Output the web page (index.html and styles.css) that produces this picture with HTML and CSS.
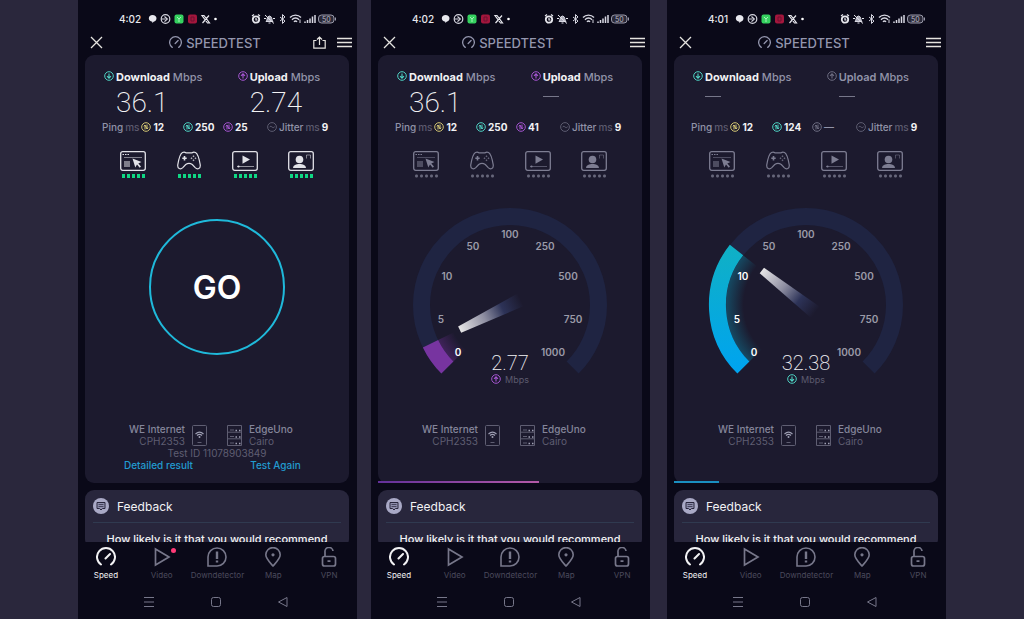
FILE: index.html
```
<!DOCTYPE html>
<html lang="en">
<head>
    <meta charset="UTF-8">
    <meta name="viewport" content="width=device-width, initial-scale=1.0">
    <title>Speedtest</title>
    <link rel="stylesheet" href="styles.css">
</head>
<body>
    <!-- Shared icons -->
    <svg class="sprite" aria-hidden="true">
        <symbol id="status-left" viewBox="0 0 74 12">
            <path fill="#e8e8ee" d="M4.500 2c2.400 0 4 1.500 4 3.300S7.300 8.500 6 8.600L4.300 10V8.700C2 8.500.8 7 .8 5.300S2.300 2 4.500 2z"/>
            <g fill="none" stroke="#d5d5df" stroke-width="1.200"><circle cx="17.500" cy="6" r="4.300"/><path d="M13.500 6h4M16.500 3.500 19.300 6l-2.800 2.600"/></g>
            <rect x="26.500" y="1.500" width="9" height="9" rx="2" fill="#35d15f"/>
            <path d="M29 4l2 2 2-2M31 6v3" stroke="#a5f0b8" fill="none"/>
            <rect x="40" y="1.500" width="9" height="9" rx="2" fill="#a3163c"/>
            <path d="M43 4h3v4h-3z" stroke="#6f1030" fill="none"/>
            <path d="M54 2.500h2l5.500 7.500h-2zM61 2.500 54.500 10" stroke="#e8e8ee" stroke-width="1.200" fill="none"/>
            <circle cx="67.500" cy="6" r="1.300" fill="#fff"/>
        </symbol>
        <symbol id="status-right" viewBox="0 0 86 12">
            <circle cx="5" cy="6.500" r="3.200" fill="none" stroke="#e8e8ee" stroke-width="1.800"/>
            <path d="M1 3l2-1.500M9 3 7 1.500M5 5v2h1.500" stroke="#e8e8ee" stroke-width="1.200" fill="none"/>
            <path d="M15 8.500c1.500-1 .8-5.500 3.500-5.500S20.500 7.500 22 8.500zM17.500 10h2" fill="#aaaab8" stroke="#d8d8e2"/>
            <path d="M14 2l9 8.500M13 5.500h2M22 5.500h2" stroke="#e8e8ee" fill="none"/>
            <path d="M29 4l5 4-2.500 2.500v-9L34 4l-5 4" stroke="#d8d8e2" fill="none"/>
            <g fill="none" stroke="#d8d8e2" stroke-width="1.400"><path d="M39 4.500c3-3.200 8-3.200 11 0M41 6.700c2-2.200 5-2.200 7 0M43 8.900c1-1.200 2-1.200 3 0"/></g>
            <path d="M49 10V6.500" stroke="#d8d8e2"/>
            <path d="M54 10V8.500M56.500 10V7M59 10V5.500M61.500 10V3.500M64 10V2" stroke="#d8d8e2" stroke-width="1.500"/>
            <rect x="67.500" y="2" width="15.500" height="8" rx="3" fill="#2a2938" stroke="#9a9aaa"/>
            <path d="M84.500 4.500v3" stroke="#9a9aaa"/>
            <text x="75.300" y="8.500" text-anchor="middle" font-size="7" fill="#b9b9c6">50</text>
        </symbol>
        <symbol id="close" viewBox="0 0 13 13"><path d="M1 1l11 11M12 1 1 12" fill="none" stroke="currentColor" stroke-width="1.300"/></symbol>
        <symbol id="share" viewBox="0 0 13 13"><path d="M3.500 4.500H.8v7.700h11.400V4.500H9.500M6.500 9V1.200M4 3.500l2.500-2.500L9 3.500" fill="none" stroke="currentColor" stroke-width="1.200"/></symbol>
        <symbol id="menu" viewBox="0 0 15 11"><path d="M0 1.500h15M0 5.500h15M0 9.500h15" stroke="currentColor" stroke-width="1.700"/></symbol>
        <symbol id="meter" viewBox="0 0 20 20"><path d="M5 17.500a9 9 0 1 1 10 0M9.500 11.500l4.500-4.500" fill="none" stroke="currentColor" stroke-width="2" stroke-linecap="round"/></symbol>
        <symbol id="down" viewBox="0 0 10 10"><circle cx="5" cy="5" r="4.300" fill="none" stroke="currentColor"/><path d="M5 2.500v4.500M3 5.200l2 2 2-2" fill="none" stroke="currentColor" stroke-width="1.100"/></symbol>
        <symbol id="up" viewBox="0 0 10 10"><circle cx="5" cy="5" r="4.300" fill="none" stroke="currentColor"/><path d="M5 7.500V3M3 4.800l2-2 2 2" fill="none" stroke="currentColor" stroke-width="1.100"/></symbol>
        <symbol id="swap" viewBox="0 0 10 10"><circle cx="5" cy="5" r="4.300" fill="none" stroke="currentColor"/><path d="M4 7.500V3L2.800 4.300M6 2.500V7l1.200-1.300M4 3l2 4" fill="none" stroke="currentColor"/></symbol>
        <symbol id="jitter" viewBox="0 0 10 10"><circle cx="5" cy="5" r="4.400" fill="none" stroke="currentColor" stroke-width=".8"/><path d="M2.300 5.300c1-1.400 1.800-1 2.700-.3s1.700 1 2.700-.3" fill="none" stroke="currentColor" stroke-width=".8"/></symbol>
        <symbol id="web" viewBox="0 0 26 20">
            <rect x=".7" y=".7" width="24.600" height="18.600" rx="2" fill="none" stroke="currentColor" stroke-width="1.300"/>
            <path d="M2.500 3.500h1.500M5 3.500h1.500M7.500 3.500H9" stroke="currentColor"/>
            <path d="M4 6.500h18" stroke="currentColor" opacity=".5"/>
            <path d="M4 10h6v6H4z" fill="currentColor" opacity=".5"/>
            <path d="M12.500 7.500l9 3.500-3.200 1.400 2.700 3.200-1.300 1.100-2.700-3.200-1.700 3z" fill="currentColor"/>
        </symbol>
        <symbol id="game" viewBox="0 0 26 20">
            <path d="M6.500 1.500c1.200-.6 2.300-.6 3.400.3h6.200c1.100-.9 2.200-.9 3.400-.3 2.500 1.200 3.900 7.500 4.700 12.200.6 4-2.700 5.300-5 3l-2.900-3.200c-2-1.300-4.600-1.300-6.600 0l-2.900 3.200c-2.300 2.300-5.600 1-5-3C2.600 9 4 2.700 6.500 1.500z" fill="none" stroke="currentColor" stroke-width="1.200"/>
            <path d="M8.500 5v4.400M6.300 7.200h4.400" stroke="currentColor" stroke-width="1.600"/>
            <path d="M17.500 4.200l1 1-1 1-1-1zM17.500 8.200l1 1-1 1-1-1zM15.500 6.200l1 1-1 1-1-1zM19.500 6.200l1 1-1 1-1-1z" fill="currentColor" opacity=".8"/>
        </symbol>
        <symbol id="video" viewBox="0 0 26 20">
            <rect x=".7" y=".7" width="24.600" height="18.600" rx="2" fill="none" stroke="currentColor" stroke-width="1.300"/>
            <path d="M10.500 4.500l7.500 4-7.500 4.300z" fill="currentColor"/>
            <path d="M5 15.500h17" stroke="currentColor" opacity=".6"/><circle cx="6.500" cy="15.500" r="1.100" fill="currentColor"/>
        </symbol>
        <symbol id="person" viewBox="0 0 26 20">
            <rect x=".7" y=".7" width="24.600" height="18.600" rx="2" fill="none" stroke="currentColor" stroke-width="1.300"/>
            <circle cx="11.500" cy="8.500" r="3.800" fill="currentColor"/>
            <path d="M5 17c.3-3 3-4 6.500-4s6.200 1 6.500 4z" fill="currentColor"/>
            <path d="M18.500 7.500V4h4v3.500" fill="none" stroke="currentColor" opacity=".5"/>
        </symbol>
        <symbol id="phone" viewBox="0 0 15 21">
            <rect x=".5" y=".5" width="14" height="20" rx="1" fill="none" stroke="currentColor"/>
            <path d="M3.500 9c2.500-2.300 5.500-2.300 8 0M5 10.500c1.500-1.400 3.500-1.400 5 0" fill="none" stroke="#9fa0b4" stroke-width="1.100"/><circle cx="7.500" cy="12" r="1" fill="#9fa0b4"/>
            <path d="M5.500 17.500h4" stroke="currentColor"/>
        </symbol>
        <symbol id="server" viewBox="0 0 15 21">
            <path d="M.5.500h14v20H.5zM.5 7.200h14M.5 13.800h14M3 5h4M3 11.500h4M3 18h4" fill="none" stroke="currentColor"/>
            <path d="M8.500 5.500H10M12 5.500h1.500M8.500 12H10M12 12h1.500M8.500 18.500H10M12 18.500h1.500" stroke="#9fa0b4" stroke-width="1.500"/>
        </symbol>
        <symbol id="feedback" viewBox="0 0 16 16">
            <circle cx="8" cy="8" r="8" fill="#a9a9c6"/>
            <path d="M4 4.500h8v6H9.500L8 12l-1.500-1.500H4z" fill="#8f8fae" stroke="#28263c"/>
            <path d="M5.500 6.500h5M5.500 8.500h5" stroke="#28263c" stroke-width=".7"/>
        </symbol>
        <symbol id="play" viewBox="0 0 20 20"><path d="M3.500 2v16L17 10z" fill="none" stroke="currentColor" stroke-width="1.700"/></symbol>
        <symbol id="alert" viewBox="0 0 20 20"><path d="M1 19v-9a9 9 0 1 1 9 9z" fill="none" stroke="currentColor" stroke-width="1.600"/><path d="M10 4.500v7.500M10 13.500v2" stroke="currentColor" stroke-width="2.400"/></symbol>
        <symbol id="pin" viewBox="0 0 20 20"><path d="M10 19C6 14.500 2.800 11.500 2.800 7.800a7.200 7.200 0 0 1 14.400 0C17.200 11.500 14 14.500 10 19z" fill="none" stroke="currentColor" stroke-width="1.600"/><circle cx="10" cy="7.800" r="1.600" fill="currentColor"/></symbol>
        <symbol id="lock" viewBox="0 0 20 20"><rect x="3.500" y="9.500" width="13" height="9.500" rx="2" fill="none" stroke="currentColor" stroke-width="1.700"/><path d="M6 9.500V5a4 4 0 0 1 8-1M8.500 14.200h3" fill="none" stroke="currentColor" stroke-width="1.700"/></symbol>
        <symbol id="sys-menu" viewBox="0 0 12 12"><path d="M1 1.500h10M1 6h10M1 10.500h10" stroke="currentColor"/></symbol>
        <symbol id="sys-home" viewBox="0 0 12 12"><rect x="1.500" y="1.500" width="9" height="9" rx="2" fill="none" stroke="currentColor"/></symbol>
        <symbol id="sys-back" viewBox="0 0 12 12"><path d="M10 1.500v9L1.500 6z" fill="none" stroke="currentColor"/></symbol>

        <symbol id="dial" viewBox="-100 -98 200 180" overflow="visible">
            <path d="M-62.600 62.600A88.500 88.500 0 1 1 62.600 62.600" fill="none" stroke="#1f2442" stroke-width="17"/>
        </symbol>
        <defs>
            <linearGradient id="needle" gradientUnits="userSpaceOnUse" x1="-56" y1="0" x2="12" y2="0">
                <stop offset="0" stop-color="#e6e5e6"/>
                <stop offset=".4" stop-color="#8f8fa2"/>
                <stop offset=".7" stop-color="#2d3358"/>
                <stop offset="1" stop-color="#1c1a2e"/>
            </linearGradient>
            <linearGradient id="blue" x1="0" y1="0" x2="0" y2="1">
                <stop offset="0" stop-color="#0fb0c6"/>
                <stop offset="1" stop-color="#00a4ee"/>
            </linearGradient>
            <radialGradient id="blue-glow" gradientUnits="userSpaceOnUse" cx="0" cy="0" r="80">
                <stop offset=".78" stop-color="#0c8fb0" stop-opacity="0"/>
                <stop offset="1" stop-color="#0c8fb0" stop-opacity=".4"/>
            </radialGradient>
            <radialGradient id="purple-glow" gradientUnits="userSpaceOnUse" cx="0" cy="0" r="80">
                <stop offset=".78" stop-color="#75309c" stop-opacity="0"/>
                <stop offset="1" stop-color="#75309c" stop-opacity=".4"/>
            </radialGradient>
        </defs>
    </svg>

    <main class="screens">
        <!-- Finished test -->
        <section class="screen done">
            <div class="status">
                <span class="time">4:02</span>
                <svg class="status-left"><use href="#status-left"/></svg>
                <svg class="status-right"><use href="#status-right"/></svg>
            </div>
            <header class="header">
                <button class="icon-button" aria-label="Close"><svg class="i13"><use href="#close"/></svg></button>
                <h1 class="brand"><svg class="i13"><use href="#meter"/></svg>SPEEDTEST</h1>
                <div class="actions">
                    <button class="icon-button" aria-label="Share"><svg class="i13"><use href="#share"/></svg></button>
                    <button class="icon-button" aria-label="Menu"><svg class="menu"><use href="#menu"/></svg></button>
                </div>
            </header>
            <div class="content">
                <div class="card">
                    <div class="results">
                        <div class="result"><svg class="i10 teal"><use href="#down"/></svg><span class="label"><b>Download</b> Mbps</span><span class="value">36.1</span></div>
                        <div class="result"><svg class="i10 purple"><use href="#up"/></svg><span class="label"><b>Upload</b> Mbps</span><span class="value">2.74</span></div>
                    </div>
                    <div class="latency">
                        <span class="stat">Ping <small>ms</small> <svg class="i10 yellow"><use href="#swap"/></svg><b>12</b></span>
                        <span class="stat"><svg class="i10 teal"><use href="#swap"/></svg><b>250</b></span>
                        <span class="stat"><svg class="i10 purple"><use href="#swap"/></svg><b>25</b></span>
                        <span class="stat"><svg class="i10 grey"><use href="#jitter"/></svg>Jitter <small>ms</small> <b>9</b></span>
                    </div>
                    <div class="quality">
                        <span class="kind"><svg><use href="#web"/></svg><i class="dots"></i></span>
                        <span class="kind"><svg><use href="#game"/></svg><i class="dots"></i></span>
                        <span class="kind"><svg><use href="#video"/></svg><i class="dots"></i></span>
                        <span class="kind"><svg><use href="#person"/></svg><i class="dots"></i></span>
                    </div>
                    <div class="stage"><button class="go">GO</button></div>
                    <div class="route">
                        <p class="client"><strong>WE Internet</strong>CPH2353</p>
                        <svg><use href="#phone"/></svg>
                        <svg><use href="#server"/></svg>
                        <p><strong>EdgeUno</strong>Cairo</p>
                    </div>
                    <p class="test-id">Test ID 11078903849</p>
                    <div class="links"><a href="#">Detailed result</a><a href="#">Test Again</a></div>
                </div>
                <div class="feedback">
                    <h2><svg class="i16"><use href="#feedback"/></svg>Feedback</h2>
                    <p>How likely is it that you would recommend</p>
                </div>
            </div>
            <nav class="tabs">
                <a href="#" class="active"><svg class="i20"><use href="#meter"/></svg>Speed</a>
                <a href="#" class="new"><svg class="i20"><use href="#play"/></svg>Video</a>
                <a href="#"><svg class="i20"><use href="#alert"/></svg>Downdetector</a>
                <a href="#"><svg class="i20"><use href="#pin"/></svg>Map</a>
                <a href="#"><svg class="i20"><use href="#lock"/></svg>VPN</a>
            </nav>
            <div class="system">
                <button aria-label="Recent apps"><svg class="i12"><use href="#sys-menu"/></svg></button>
                <button aria-label="Home"><svg class="i12"><use href="#sys-home"/></svg></button>
                <button aria-label="Back"><svg class="i12"><use href="#sys-back"/></svg></button>
            </div>
        </section>

        <!-- Upload running -->
        <section class="screen">
            <div class="status">
                <span class="time">4:02</span>
                <svg class="status-left"><use href="#status-left"/></svg>
                <svg class="status-right"><use href="#status-right"/></svg>
            </div>
            <header class="header">
                <button class="icon-button" aria-label="Close"><svg class="i13"><use href="#close"/></svg></button>
                <h1 class="brand"><svg class="i13"><use href="#meter"/></svg>SPEEDTEST</h1>
                <div class="actions">
                    <button class="icon-button" aria-label="Menu"><svg class="menu"><use href="#menu"/></svg></button>
                </div>
            </header>
            <div class="content">
                <div class="card">
                    <div class="results">
                        <div class="result"><svg class="i10 teal"><use href="#down"/></svg><span class="label"><b>Download</b> Mbps</span><span class="value">36.1</span></div>
                        <div class="result"><svg class="i10 purple"><use href="#up"/></svg><span class="label"><b>Upload</b> Mbps</span><span class="value empty"></span></div>
                    </div>
                    <div class="latency">
                        <span class="stat">Ping <small>ms</small> <svg class="i10 yellow"><use href="#swap"/></svg><b>12</b></span>
                        <span class="stat"><svg class="i10 teal"><use href="#swap"/></svg><b>250</b></span>
                        <span class="stat"><svg class="i10 purple"><use href="#swap"/></svg><b>41</b></span>
                        <span class="stat"><svg class="i10 grey"><use href="#jitter"/></svg>Jitter <small>ms</small> <b>9</b></span>
                    </div>
                    <div class="quality">
                        <span class="kind"><svg><use href="#web"/></svg><i class="dots"></i></span>
                        <span class="kind"><svg><use href="#game"/></svg><i class="dots"></i></span>
                        <span class="kind"><svg><use href="#video"/></svg><i class="dots"></i></span>
                        <span class="kind"><svg><use href="#person"/></svg><i class="dots"></i></span>
                    </div>
                    <div class="stage">
                        <svg class="gauge" viewBox="-100 -98 200 180">
                            <use href="#dial" x="-100" y="-98" width="200" height="180"/>
                            <path d="M-49.500 49.500A70 70 0 0 1-62.900 30.700" fill="none" stroke="url(#purple-glow)" stroke-width="20"/>
                            <path d="M-62.600 62.600A88.500 88.500 0 0 1-79.500 38.800" fill="none" stroke="#7734a0" stroke-width="17"/>
                            <path d="M-56-3.500 12-7V7L-56 3.500z" fill="url(#needle)" transform="rotate(-26)"/>
                            <g class="ticks">
                                <text class="lit" x="-52" y="51">0</text>
                                <text x="-69" y="18">5</text>
                                <text x="-63" y="-25">10</text>
                                <text x="-37" y="-55">50</text>
                                <text x="0" y="-67">100</text>
                                <text x="35" y="-55">250</text>
                                <text x="58" y="-25">500</text>
                                <text x="63" y="18">750</text>
                                <text x="43" y="51">1000</text>
                            </g>
                            <text class="speed" x="0" y="65">2.77</text>
                            <use class="purple" href="#up" x="-19" y="69" width="10" height="10"/>
                            <text class="unit" x="7" y="78">Mbps</text>
                        </svg>
                    </div>
                    <div class="route">
                        <p class="client"><strong>WE Internet</strong>CPH2353</p>
                        <svg><use href="#phone"/></svg>
                        <svg><use href="#server"/></svg>
                        <p><strong>EdgeUno</strong>Cairo</p>
                    </div>
                    <div class="progress upload" style="width: 61%"></div>
                </div>
                <div class="feedback">
                    <h2><svg class="i16"><use href="#feedback"/></svg>Feedback</h2>
                    <p>How likely is it that you would recommend</p>
                </div>
            </div>
            <nav class="tabs">
                <a href="#" class="active"><svg class="i20"><use href="#meter"/></svg>Speed</a>
                <a href="#"><svg class="i20"><use href="#play"/></svg>Video</a>
                <a href="#"><svg class="i20"><use href="#alert"/></svg>Downdetector</a>
                <a href="#"><svg class="i20"><use href="#pin"/></svg>Map</a>
                <a href="#"><svg class="i20"><use href="#lock"/></svg>VPN</a>
            </nav>
            <div class="system">
                <button aria-label="Recent apps"><svg class="i12"><use href="#sys-menu"/></svg></button>
                <button aria-label="Home"><svg class="i12"><use href="#sys-home"/></svg></button>
                <button aria-label="Back"><svg class="i12"><use href="#sys-back"/></svg></button>
            </div>
        </section>

        <!-- Download running -->
        <section class="screen">
            <div class="status">
                <span class="time">4:01</span>
                <svg class="status-left"><use href="#status-left"/></svg>
                <svg class="status-right"><use href="#status-right"/></svg>
            </div>
            <header class="header">
                <button class="icon-button" aria-label="Close"><svg class="i13"><use href="#close"/></svg></button>
                <h1 class="brand"><svg class="i13"><use href="#meter"/></svg>SPEEDTEST</h1>
                <div class="actions">
                    <button class="icon-button" aria-label="Menu"><svg class="menu"><use href="#menu"/></svg></button>
                </div>
            </header>
            <div class="content">
                <div class="card">
                    <div class="results">
                        <div class="result"><svg class="i10 teal"><use href="#down"/></svg><span class="label"><b>Download</b> Mbps</span><span class="value empty"></span></div>
                        <div class="result waiting"><svg class="i10 grey"><use href="#up"/></svg><span class="label"><b>Upload</b> Mbps</span><span class="value empty"></span></div>
                    </div>
                    <div class="latency">
                        <span class="stat">Ping <small>ms</small> <svg class="i10 yellow"><use href="#swap"/></svg><b>12</b></span>
                        <span class="stat"><svg class="i10 teal"><use href="#swap"/></svg><b>124</b></span>
                        <span class="stat"><svg class="i10 grey"><use href="#swap"/></svg>—</span>
                        <span class="stat"><svg class="i10 grey"><use href="#jitter"/></svg>Jitter <small>ms</small> <b>9</b></span>
                    </div>
                    <div class="quality">
                        <span class="kind"><svg><use href="#web"/></svg><i class="dots"></i></span>
                        <span class="kind"><svg><use href="#game"/></svg><i class="dots"></i></span>
                        <span class="kind"><svg><use href="#video"/></svg><i class="dots"></i></span>
                        <span class="kind"><svg><use href="#person"/></svg><i class="dots"></i></span>
                    </div>
                    <div class="stage">
                        <svg class="gauge" viewBox="-100 -98 200 180">
                            <use href="#dial" x="-100" y="-98" width="200" height="180"/>
                            <path d="M-49.500 49.500A70 70 0 0 1-54.900-43.400" fill="none" stroke="url(#blue-glow)" stroke-width="20"/>
                            <path d="M-62.600 62.600A88.500 88.500 0 0 1-69.500-54.900" fill="none" stroke="url(#blue)" stroke-width="17"/>
                            <path d="M-56-3.500 12-7V7L-56 3.500z" fill="url(#needle)" transform="rotate(38)"/>
                            <g class="ticks">
                                <text class="lit" x="-52" y="51">0</text>
                                <text class="lit" x="-69" y="18">5</text>
                                <text class="lit" x="-63" y="-25">10</text>
                                <text x="-37" y="-55">50</text>
                                <text x="0" y="-67">100</text>
                                <text x="35" y="-55">250</text>
                                <text x="58" y="-25">500</text>
                                <text x="63" y="18">750</text>
                                <text x="43" y="51">1000</text>
                            </g>
                            <text class="speed" x="0" y="65">32.38</text>
                            <use class="teal" href="#down" x="-19" y="69" width="10" height="10"/>
                            <text class="unit" x="7" y="78">Mbps</text>
                        </svg>
                    </div>
                    <div class="route">
                        <p class="client"><strong>WE Internet</strong>CPH2353</p>
                        <svg><use href="#phone"/></svg>
                        <svg><use href="#server"/></svg>
                        <p><strong>EdgeUno</strong>Cairo</p>
                    </div>
                    <div class="progress download" style="width: 17%"></div>
                </div>
                <div class="feedback">
                    <h2><svg class="i16"><use href="#feedback"/></svg>Feedback</h2>
                    <p>How likely is it that you would recommend</p>
                </div>
            </div>
            <nav class="tabs">
                <a href="#" class="active"><svg class="i20"><use href="#meter"/></svg>Speed</a>
                <a href="#"><svg class="i20"><use href="#play"/></svg>Video</a>
                <a href="#"><svg class="i20"><use href="#alert"/></svg>Downdetector</a>
                <a href="#"><svg class="i20"><use href="#pin"/></svg>Map</a>
                <a href="#"><svg class="i20"><use href="#lock"/></svg>VPN</a>
            </nav>
            <div class="system">
                <button aria-label="Recent apps"><svg class="i12"><use href="#sys-menu"/></svg></button>
                <button aria-label="Home"><svg class="i12"><use href="#sys-home"/></svg></button>
                <button aria-label="Back"><svg class="i12"><use href="#sys-back"/></svg></button>
            </div>
        </section>
    </main>
</body>
</html>
```
FILE: styles.css
```
* {
    box-sizing: border-box;
}

body {
    margin: 0;
    font-family: Inter, "Liberation Sans", sans-serif;
    font-size: 11px;
    color: #9193a8;
    background-color: #2a273c;
}

h1, h2, p {
    margin: 0;
    font-weight: 400;
}

button {
    padding: 0;
    border: none;
    background: none;
    color: inherit;
    font-family: inherit;
    cursor: pointer;
}

a {
    color: inherit;
    text-decoration: none;
}

svg {
    display: block;
    flex: none;
}

.sprite {
    position: absolute;
    width: 0;
    height: 0;
}

.i10 { width: 10px; height: 10px; }
.i12 { width: 12px; height: 12px; }
.i13 { width: 13px; height: 13px; }
.i16 { width: 16px; height: 16px; }
.i20 { width: 20px; height: 20px; }

.teal { color: #4fd3c4; }
.purple { color: #a455d0; }
.yellow { color: #d3c673; }
.grey { color: #6c6c80; }

.screens {
    display: grid;
    grid-template-columns: 279fr 279fr 282fr;
    gap: 14px;
    padding: 0 78px;
}

.screen {
    display: flex;
    flex-direction: column;
    height: 100vh;
    min-width: 0;
    background-color: #0a0918;
}

.screen:last-child {
    margin-left: 3px;
}

/* Status bar */
.status {
    display: flex;
    align-items: center;
    gap: 7px;
    padding: 12px 20px 0 41px;
}

.time {
    font-size: 10px;
    line-height: 14px;
    font-weight: 500;
    color: #e8e8ee;
}

.status-left {
    width: 74px;
    height: 12px;
}

.status-right {
    width: 86px;
    height: 12px;
    margin-left: auto;
}

/* App header */
.header {
    display: grid;
    grid-template-columns: 1fr auto 1fr;
    align-items: center;
    height: 29px;
    padding: 4px 5px 0 6px;
}

.icon-button {
    justify-self: start;
    padding: 0 6px;
    color: #e6e4e0;
}

.brand {
    display: flex;
    align-items: center;
    gap: 4px;
    margin-right: 6px;
    font-size: 13px;
    font-weight: 500;
    color: #9496ae;
}

.actions {
    display: flex;
    justify-content: flex-end;
    align-items: center;
    gap: 5px;
}

.actions .icon-button {
    padding: 0 0 0 6px;
}

.menu {
    width: 15px;
    height: 11px;
}

.content {
    flex: 1;
    min-height: 0;
    overflow: hidden;
    padding: 0 8px 0 7px;
}

.card {
    position: relative;
    min-height: 428px;
    padding-top: 13px;
    border-radius: 9px;
    background-color: #1c1a2e;
}

/* Results */
.results {
    display: grid;
    grid-template-columns: 6fr 5fr;
    padding-left: 19px;
}

.result {
    display: grid;
    grid-template-columns: 10px 1fr;
    column-gap: 2px;
    padding-top: 1px;
}

.result .i10 {
    margin-top: 2px;
}

.label {
    line-height: 17px;
    font-weight: 500;
    white-space: nowrap;
}

.label b {
    font-weight: 700;
    color: #f2f2f4;
}

.waiting .label b {
    font-weight: 600;
    color: inherit;
}

.value {
    grid-column: 2;
    height: 32px;
    font-family: Roboto, sans-serif;
    font-size: 28px;
    line-height: 34px;
    font-weight: 200;
    color: #f2f2f4;
}

.value.empty::before {
    content: "";
    display: block;
    width: 16px;
    height: 1px;
    margin-top: 10px;
    background-color: #77778a;
}

.latency {
    display: grid;
    grid-template-columns: 81fr 40fr 44fr 64fr;
    padding: 1px 18px 0 17px;
    font-size: 10px;
    line-height: 16px;
    font-weight: 500;
}

.stat {
    display: flex;
    align-items: center;
    gap: 2px;
    white-space: nowrap;
}

.stat small {
    font-size: 10px;
    color: #5c5b6e;
}

.stat b {
    font-weight: 700;
    color: #f2f2f4;
}

.quality {
    display: flex;
    justify-content: center;
    gap: 30px;
    padding-top: 16px;
    color: #7d7d92;
}

.kind svg {
    width: 26px;
    height: 20px;
}

.dots {
    display: block;
    width: 25px;
    height: 4px;
    margin: 3px auto 0;
    background-image: radial-gradient(circle, #66667a 1px, transparent 2px);
    background-size: 5px 4px;
}

.done .quality {
    color: #e2e2e8;
}

.done .dots {
    background-image: radial-gradient(circle, #0fd884 2px, transparent 2px);
}

/* Go button and gauge */
.stage {
    display: flex;
    justify-content: center;
    height: 245px;
}

.go {
    width: 136px;
    height: 136px;
    margin-top: 41px;
    border: 2px solid #1fb9da;
    border-radius: 50%;
    font-size: 32px;
    font-weight: 600;
    color: #fff;
}

.gauge {
    width: 200px;
    height: 180px;
    margin-top: 29px;
    overflow: visible;
}

.ticks {
    font-size: 10px;
    font-weight: 600;
    text-anchor: middle;
    fill: #9b9aa8;
}

.ticks .lit {
    fill: #fff;
}

.speed {
    font-family: Roboto, sans-serif;
    font-size: 20px;
    font-weight: 200;
    text-anchor: middle;
    fill: #f2f2f4;
}

.unit {
    font-size: 9px;
    text-anchor: middle;
    fill: #5c5b6e;
}

/* Client and server */
.route {
    display: grid;
    grid-template-columns: 1fr 15px 15px 1fr;
    align-items: center;
    font-size: 10px;
    line-height: 12px;
    color: #5f5e72;
}

.route svg {
    width: 15px;
    height: 21px;
}

.route svg + svg {
    margin-left: 10px;
}

.route svg:first-of-type {
    margin-left: -10px;
}

.route p {
    padding-left: 17px;
}

.route .client {
    padding: 0 17px 0 0;
    text-align: right;
}

.route strong {
    display: block;
    font-weight: 500;
    color: #85869b;
}

.test-id {
    font-size: 10px;
    line-height: 12px;
    text-align: center;
    color: #5f5e72;
}

.links {
    display: grid;
    grid-template-columns: 1fr 1fr;
    justify-items: center;
    gap: 2px;
    padding: 0 16px;
    font-size: 10px;
    line-height: 12px;
    font-weight: 500;
    color: #229bd0;
}

.progress {
    position: absolute;
    left: 0;
    bottom: 0;
    height: 2px;
}

.upload {
    background: linear-gradient(90deg, #63309a, #b45aa8);
}

.download {
    background: #1a8fc0;
}

/* Feedback */
.feedback {
    margin-top: 7px;
    padding: 0 8px;
    border-radius: 9px;
    background-color: #28263c;
    color: #f2f2f4;
}

.feedback h2 {
    display: flex;
    align-items: center;
    gap: 8px;
    height: 33px;
    border-bottom: 1px solid #303a50;
    font-size: 12px;
}

.feedback p {
    padding-top: 7px;
    font-size: 11px;
    line-height: 18px;
    font-weight: 500;
    text-align: center;
    white-space: nowrap;
}

/* Bottom navigation */
.tabs {
    display: grid;
    grid-template-columns: repeat(5, 1fr);
    padding-top: 5px;
}

.tabs a {
    position: relative;
    display: flex;
    flex-direction: column;
    align-items: center;
    gap: 3px;
    font-size: 8px;
    line-height: 10px;
    color: #4a495c;
}

.tabs svg {
    color: #77778a;
}

.tabs .active,
.tabs .active svg {
    color: #f2f2f4;
}

.new::after {
    content: "";
    position: absolute;
    top: 1px;
    right: 14px;
    width: 5px;
    height: 5px;
    border-radius: 50%;
    background-color: #ff3b78;
}

.system {
    display: flex;
    justify-content: center;
    gap: 55px;
    padding: 16px 4px 11px 0;
    color: #77778a;
}
```
